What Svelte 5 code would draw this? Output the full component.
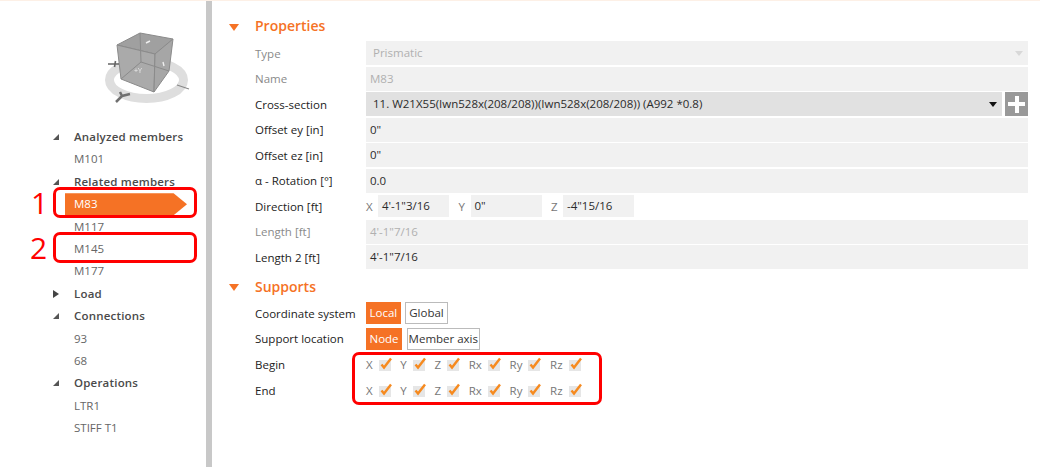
<script>
	const tree = [
		{ label: 'Analyzed members', open: true, items: ['M101'] },
		{ label: 'Related members', open: true, items: ['M83', 'M117', 'M145', 'M177'] },
		{ label: 'Load', open: false, items: [] },
		{ label: 'Connections', open: true, items: ['93', '68'] },
		{ label: 'Operations', open: true, items: ['LTR1', 'STIFF T1'] }
	];
	const axes = ['X', 'Y', 'Z', 'Rx', 'Ry', 'Rz'];
	const direction = [
		['X', '4\'-1"3/16'],
		['Y', '0"'],
		['Z', '-4"15/16']
	];
</script>

{#snippet check()}
	<svg class="check" width="13" height="15" viewBox="0 0 13 15">
		<rect x="0" y="3" width="12" height="11" fill="#e6e6e6" />
		<path d="M2.5 7.5 L5 10.5 L12 1.5" fill="none" stroke="#f68a1f" stroke-width="2.4" />
	</svg>
{/snippet}

{#snippet supportRow(label)}
	<span class="label">{label}</span>
	<div class="checks">
		{#each axes as a}
			<span class="axis">
				<span class="axis-name">{a}</span>
				{@render check()}
			</span>
		{/each}
	</div>
{/snippet}

<div class="page">
	<aside class="side">
		<svg class="cube" width="90" height="76" viewBox="100 30 90 76">
			<ellipse cx="146.5" cy="80" rx="37" ry="18.5" fill="none" stroke="#dedede" stroke-width="9" />
			<path d="M117 45 L140 33 L173 39 L155 54 Z" fill="#a0a0a0" stroke="#8a8a8a" />
			<path d="M117 45 L155 54 L154 92 L121 79 Z" fill="#aaa" stroke="#8a8a8a" />
			<path d="M155 54 L173 39 L169 71 L154 92 Z" fill="#a6a6a6" stroke="#8a8a8a" />
			<path d="M140 33 L141 62 M121 79 L141 62 L169 71" fill="none" stroke="#8a8a8a" />
			<path d="M108 64 H119 M115.5 61 L114.5 67" fill="none" stroke="#666" stroke-width="1.6" />
			<path d="M116 102 L122 96 L130 94 M122 96 L120 92" fill="none" stroke="#707070" stroke-width="2.5" />
			<path d="M177 85 L189 89" fill="none" stroke="#888" stroke-width="1.2" />
			<text x="134" y="73" class="cube-label">+Y</text>
			<path d="M146 43 L150 41 M163 62 L164 66" stroke="#eee" stroke-width="1.4" fill="none" />
		</svg>
		<ul class="tree">
			{#each tree as group}
				<li class="head">
					<span class="arrow" class:closed={!group.open}></span>
					{group.label}
				</li>
				{#each group.items as item}
					<li class="leaf" class:active={item === 'M83'}>
						<span>{item}</span>
					</li>
				{/each}
			{/each}
		</ul>
	</aside>

	<main class="main">
		<h2 class="section"><span class="tri"></span>Properties</h2>
		<div class="form">
			<span class="label muted">Type</span>
			<div class="field muted select">
				<span class="pad">Prismatic</span>
				<span class="caret light"></span>
			</div>
			<span class="label muted">Name</span>
			<div class="field muted">M83</div>
			<span class="label">Cross-section</span>
			<div class="cross">
				<div class="field dark select">
					<span class="pad">11. W21X55(Iwn528x(208/208))(Iwn528x(208/208)) (A992 *0.8)</span>
					<span class="caret"></span>
				</div>
				<div class="plus"><span></span></div>
			</div>
			<span class="label">Offset ey [in]</span>
			<div class="field">0"</div>
			<span class="label">Offset ez [in]</span>
			<div class="field">0"</div>
			<span class="label">α - Rotation [°]</span>
			<div class="field">0.0</div>
			<span class="label">Direction [ft]</span>
			<div class="direction">
				{#each direction as [axis, value]}
					<span class="axis-name">{axis}</span>
					<div class="field short">{value}</div>
				{/each}
			</div>
			<span class="label muted">Length [ft]</span>
			<div class="field muted">4'-1"7/16</div>
			<span class="label">Length 2 [ft]</span>
			<div class="field">4'-1"7/16</div>
		</div>

		<h2 class="section second"><span class="tri"></span>Supports</h2>
		<div class="form supports">
			<span class="label">Coordinate system</span>
			<div class="toggles">
				<button class="on">Local</button>
				<button>Global</button>
			</div>
			<span class="label">Support location</span>
			<div class="toggles">
				<button class="on">Node</button>
				<button class="tight">Member axis</button>
			</div>
			{@render supportRow('Begin')}
			{@render supportRow('End')}
		</div>
	</main>

	<!-- annotations drawn over the screenshot -->
	<div class="mark" style="left:53px;top:186px;width:144px;height:31px"></div>
	<div class="mark" style="left:53px;top:231px;width:144px;height:31px"></div>
	<div class="mark" style="left:352px;top:351px;width:250px;height:53px"></div>
	<span class="num" style="left:31px;top:184px">1</span>
	<span class="num" style="left:30px;top:229px">2</span>
</div>

<style>
	:global(body) {
		margin: 0;
		background: #fff;
	}
	.page {
		position: relative;
		width: 1040px;
		height: 467px;
		display: flex;
		overflow: hidden;
		box-sizing: border-box;
		border-top: 1px solid #fdf0e6;
		font-family: 'Open Sans', 'Noto Sans', sans-serif;
		font-size: 11.5px;
		color: #2b2b2b;
	}
	.side {
		flex: none;
		width: 212px;
		height: 100%;
		box-sizing: border-box;
		border-right: 6px solid #c8c8c8;
		padding-top: 29px;
	}
	.cube {
		display: block;
		margin-left: 100px;
		filter: blur(0.4px);
	}
	.cube-label {
		font-size: 7px;
		fill: #eee;
	}
	.tree {
		list-style: none;
		margin: 20px 0 0;
		padding: 0;
	}
	.tree li {
		height: 22.4px;
		line-height: 22.4px;
		white-space: nowrap;
	}
	.head {
		position: relative;
		padding-left: 74px;
		font-weight: 600;
		letter-spacing: 0.2px;
		color: #4a4a4a;
	}
	.arrow {
		position: absolute;
		left: 53px;
		top: 8px;
		width: 0;
		height: 0;
		border-left: 6px solid transparent;
		border-bottom: 6px solid #555;
	}
	.arrow.closed {
		top: 7px;
		border-top: 4px solid transparent;
		border-bottom: 4px solid transparent;
		border-left: 6px solid #444;
	}
	.leaf {
		padding-left: 74px;
		color: #666;
	}
	.leaf.active {
		position: relative;
		color: #fff;
	}
	.leaf.active::before {
		content: '';
		position: absolute;
		left: 65px;
		top: 0;
		width: 122px;
		height: 22px;
		background: #f57225;
		clip-path: polygon(0 0, 89% 0, 100% 50%, 89% 100%, 0 100%);
	}
	.leaf.active span {
		position: relative;
	}
	.main {
		flex: 1;
		min-width: 0;
		padding: 0 12px 0 17px;
	}
	.section {
		position: relative;
		margin: 0;
		padding: 15px 0 0 26px;
		height: 25px;
		font-size: 14px;
		line-height: 20px;
		font-weight: 600;
		color: #f57225;
	}
	.section.second {
		margin-top: 5px;
		padding-top: 3px;
		height: 24px;
	}
	.tri {
		position: absolute;
		left: 0;
		bottom: 10px;
		width: 0;
		height: 0;
		border-left: 5.5px solid transparent;
		border-right: 5.5px solid transparent;
		border-top: 7px solid #f57225;
	}
	.form {
		display: grid;
		grid-template-columns: 111px 662px;
		grid-auto-rows: 24px;
		row-gap: 1.5px;
		align-items: center;
		margin-left: 26px;
	}
	.label {
		color: #222;
		white-space: nowrap;
	}
	.label.muted {
		color: #8a8a8a;
	}
	.field {
		height: 24px;
		line-height: 24px;
		box-sizing: border-box;
		padding-left: 4px;
		background: #f1f1f1;
		font-weight: 500;
	}
	.field.muted {
		color: #b0b0b0;
		font-weight: 400;
	}
	.pad {
		padding-left: 3px;
	}
	.field.dark {
		background: #e1e1e1;
		font-weight: 400;
		flex: 1;
	}
	.select {
		display: flex;
		justify-content: space-between;
		align-items: center;
		padding-right: 5px;
	}
	.caret {
		width: 0;
		height: 0;
		border-left: 4px solid transparent;
		border-right: 4px solid transparent;
		border-top: 5px solid #111;
	}
	.caret.light {
		border-top-color: #d8d8d8;
	}
	.cross {
		display: flex;
		gap: 3px;
	}
	.plus {
		position: relative;
		width: 23px;
		height: 24px;
		background: #999;
	}
	.plus span {
		position: absolute;
		left: 3px;
		top: 10px;
		width: 17px;
		height: 4px;
		background: #fff;
	}
	.plus span::after {
		content: '';
		position: absolute;
		left: 6.5px;
		top: -6.5px;
		width: 4px;
		height: 17px;
		background: #fff;
	}
	.direction {
		display: flex;
		align-items: center;
		height: 24px;
	}
	.direction .axis-name {
		width: 12px;
	}
	.field.short {
		width: 71px;
		height: 22px;
		line-height: 22px;
		margin-right: 9.5px;
	}
	.supports {
		row-gap: 1.95px;
	}
	.toggles {
		display: flex;
		gap: 4.5px;
	}
	.toggles button {
		height: 22px;
		padding: 0 3px;
		margin: 0;
		font: inherit;
		color: #333;
		background: #fff;
		border: 1px solid #bbb;
		line-height: 20px;
	}
	.toggles button.tight {
		padding: 0 1px;
	}
	.toggles button.on {
		padding: 0 2.5px;
		background: #f57225;
		border-color: #f57225;
		color: #fff;
	}
	.checks {
		display: flex;
		gap: 8.7px;
	}
	.axis {
		display: flex;
		align-items: center;
		gap: 6px;
	}
	.axis-name {
		color: #777;
	}
	.check {
		display: block;
		overflow: visible;
	}
	.mark {
		position: absolute;
		box-sizing: border-box;
		border: 3.5px solid #f00;
		border-radius: 7px;
	}
	.num {
		position: absolute;
		font-size: 30px;
		line-height: 36px;
		font-family: 'Open Sans', sans-serif;
		color: #f00;
	}
</style>
